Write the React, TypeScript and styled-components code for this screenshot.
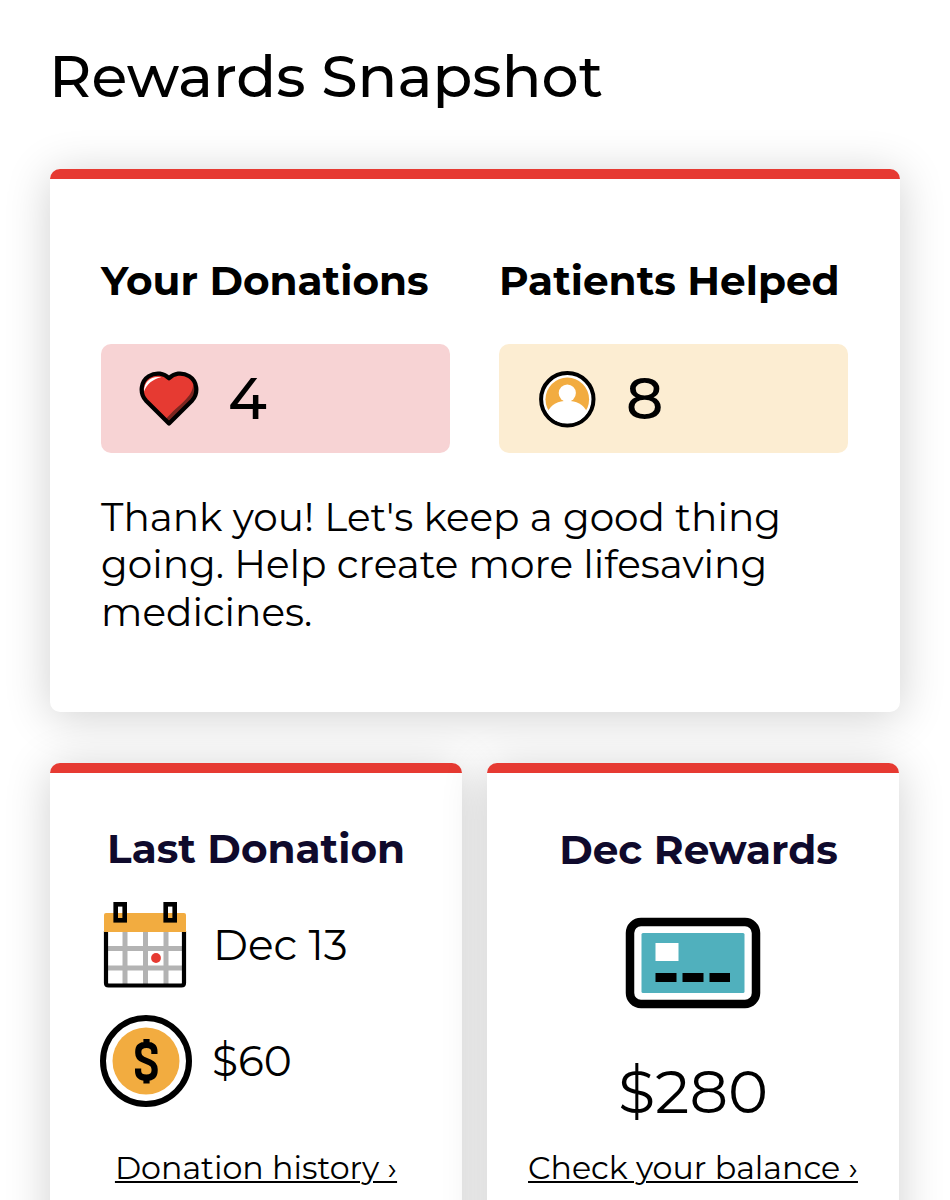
import React from 'react';
import styled, { createGlobalStyle } from 'styled-components';

const GlobalStyle = createGlobalStyle`
  *, *::before, *::after { box-sizing: border-box; }
  body {
    margin: 0;
    background: #fff;
    color: #000;
    font-family: Montserrat, Inter, "Liberation Sans", sans-serif;
  }
  svg { display: block; flex: none; }
`;

const Page = styled.main`
  width: 950px;
  height: 1200px;
  padding: 41px 51px 0 50px;
  overflow: hidden;
`;

const Title = styled.h1`
  margin: 0 0 58px -1px;
  font-size: 58.5px;
  font-weight: 500;
  line-height: 70px;
  white-space: nowrap;
`;

const Card = styled.section`
  background: #fff;
  border-top: 10px solid #e63a32;
  border-radius: 10px;
  box-shadow: 0 5px 46px rgba(0, 0, 0, 0.19);
`;

const SummaryCard = styled(Card)`
  width: 850px;
  height: 543px;
  padding: 77px 51px 0;
`;

const Stats = styled.div`
  display: grid;
  grid-template-columns: 349px 349px;
  column-gap: 49px;
`;

const Heading = styled.h2<{ $shift?: number }>`
  margin: 0;
  padding-left: ${(p) => p.$shift ?? 0}px;
  font-size: 40.6px;
  font-weight: 700;
  line-height: 50px;
  white-space: nowrap;
`;

const StatBox = styled.div<{ $color: string }>`
  display: flex;
  align-items: center;
  gap: 29px;
  height: 109px;
  margin-top: 38px;
  padding-left: 38px;
  border-radius: 10px;
  background: ${(p) => p.$color};
`;

const StatValue = styled.span`
  font-size: 58px;
  font-weight: 500;
  line-height: 70px;
`;

const Message = styled.p`
  margin: 41px 0 0;
  font-size: 39px;
  font-weight: 400;
  line-height: 47.4px;
  white-space: nowrap;
`;

const CardRow = styled.div`
  display: flex;
  gap: 25px;
  margin-top: 51px;
`;

const SmallCard = styled(Card)<{ $top: number }>`
  display: flex;
  flex-direction: column;
  align-items: center;
  width: 412px;
  height: 520px;
  padding-top: ${(p) => p.$top}px;

  h2 { color: #0f0a2c; }
`;

const Detail = styled.div<{ $top: number; $gap: number }>`
  display: flex;
  align-items: center;
  align-self: flex-start;
  gap: ${(p) => p.$gap}px;
  margin: ${(p) => p.$top}px 0 0 50px;
`;

const DetailText = styled.span`
  font-size: 42.3px;
  line-height: 50px;
`;

const CardArt = styled.div`
  margin-top: 42px;
`;

const Balance = styled.div`
  margin-top: 46px;
  font-size: 60.5px;
  line-height: 72px;
`;

const TextLink = styled.a<{ $top: number }>`
  margin-top: ${(p) => p.$top}px;
  color: #000;
  font-size: 31.7px;
  line-height: 40px;
  text-decoration: underline;
  text-decoration-thickness: 2px;
  text-underline-offset: 2px;
  white-space: nowrap;
`;

const heartPath =
  'M30 54 L6 30 C-1 22 1 10 9 5 C17 0 25 2 30 7 C35 2 43 0 51 5 C59 10 61 22 54 30 Z';

const HeartIcon = () => (
  <svg width="60" height="56" viewBox="-1 -0.500 62 58">
    <path d={heartPath} fill="#e63a32" />
    <path d="M55 13 C55 27 40 34 27 49 L30 53 L54 30 C59 23 58 15 55 13Z" fill="#7b2620" />
    <path d="M4 21 C4 10 12 4 22 6 C13 8 7 13 4 21Z" fill="#fff" />
    <path d={heartPath} fill="none" stroke="#000" strokeWidth="4.400" strokeLinejoin="round" />
  </svg>
);

const PersonIcon = () => (
  <svg width="60" height="60" viewBox="0 0.700 60 60">
    <circle cx="30.300" cy="31" r="26.2" fill="#fff" stroke="#000" strokeWidth="4" />
    <circle cx="30.300" cy="31" r="21.800" fill="#f2ac40" />
    <circle cx="30.300" cy="24.800" r="8.6" fill="#fff" />
    <path d="M10.300 44 C14.300 36 21.300 32.500 30.300 32.500 C39.300 32.500 46.300 36 50.300 44 C46.300 51 39.300 55 30.300 55 C21.300 55 14.300 51 10.300 44Z" fill="#fff" />
  </svg>
);

const CalendarIcon = () => (
  <svg width="90" height="90" viewBox="0 0 90 90">
    <rect x="5.5" y="24" width="79" height="62" rx="2" fill="#fff" />
    <path d="M25 32V84M45.5 32V84M66 32V84M7 48.5H83M7 68H83" stroke="#b3b3b3" strokeWidth="5" />
    <path d="M6 31V83Q6 85.5 8.5 85.5H81.500Q84 85.500 84 83V31" fill="none" stroke="#000" strokeWidth="4.200" />
    <path d="M4 15Q4 13 6 13H84Q86 13 86 15V32H4Z" fill="#f2ac40" />
    <path d="M16 4H24V13H16ZM66 4H74V13H66Z" fill="#fff" />
    <rect x="15.700" y="4.300" width="9" height="16" fill="none" stroke="#000" strokeWidth="4.600" />
    <rect x="65.700" y="4.300" width="9" height="16" fill="none" stroke="#000" strokeWidth="4.600" />
    <circle cx="56" cy="58" r="4.900" fill="#e63a32" />
  </svg>
);

const CoinIcon = () => (
  <svg width="92" height="92" viewBox="0 0 92 92">
    <circle cx="46" cy="46" r="43" fill="#fff" stroke="#000" strokeWidth="6" />
    <circle cx="46" cy="46" r="33.500" fill="#f2ac40" />
    <path
      d="M54.400 39V36.500Q54.400 29.800 46.500 29.800Q38.300 29.800 38.300 36.500V38Q38.300 42.500 43 44.500L50 47.500Q54.600 49.500 54.600 54V55.500Q54.600 62.700 46.500 62.700Q38.100 62.700 38.100 56V53.500M46.500 24V30M46.500 62V68.500"
      fill="none"
      stroke="#000"
      strokeWidth="6.200"
    />
  </svg>
);

const PaymentCardIcon = () => (
  <svg width="136" height="92" viewBox="0 0 136 92">
    <rect x="5" y="5" width="126" height="82" rx="11" fill="#fff" stroke="#000" strokeWidth="8.500" />
    <rect x="16.500" y="16" width="103" height="60" rx="1.500" fill="#50b0bd" />
    <rect x="30.500" y="26" width="23" height="18" fill="#fff" />
    <path d="M30.500 60.500H51.500M57.500 60.500H78.500M84.500 60.500H105" stroke="#000" strokeWidth="9" />
  </svg>
);

export default function App() {
  return (
    <>
      <GlobalStyle />
      <Page>
        <Title>Rewards Snapshot</Title>
        <SummaryCard>
          <Stats>
            <div>
              <Heading>Your Donations</Heading>
              <StatBox $color="#f7d3d4">
                <HeartIcon />
                <StatValue>4</StatValue>
              </StatBox>
            </div>
            <div>
              <Heading>Patients Helped</Heading>
              <StatBox $color="#fcedd2">
                <PersonIcon />
                <StatValue>8</StatValue>
              </StatBox>
            </div>
          </Stats>
          <Message>
            Thank you! Let's keep a good thing
            <br />
            going. Help create more lifesaving
            <br />
            medicines.
          </Message>
        </SummaryCard>
        <CardRow>
          <SmallCard $top={51}>
            <Heading>Last Donation</Heading>
            <Detail $top={26} $gap={23}>
              <CalendarIcon />
              <DetailText>Dec 13</DetailText>
            </Detail>
            <Detail $top={25} $gap={20}>
              <CoinIcon />
              <DetailText>$60</DetailText>
            </Detail>
            <TextLink $top={41}>Donation history ›</TextLink>
          </SmallCard>
          <SmallCard $top={52}>
            <Heading $shift={11}>Dec Rewards</Heading>
            <CardArt>
              <PaymentCardIcon />
            </CardArt>
            <Balance>$280</Balance>
            <TextLink $top={21}>Check your balance ›</TextLink>
          </SmallCard>
        </CardRow>
      </Page>
    </>
  );
}
